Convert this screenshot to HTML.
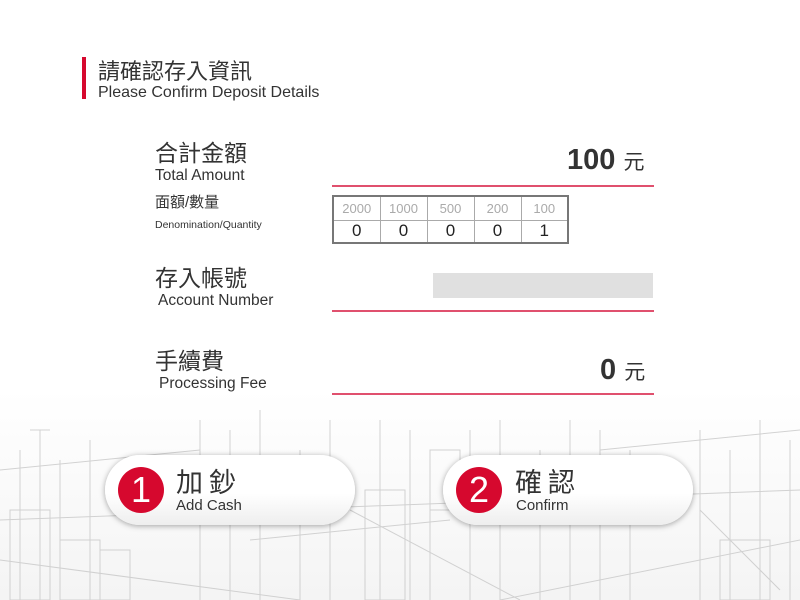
<!DOCTYPE html>
<html><head><meta charset="utf-8"><style>
*{margin:0;padding:0;box-sizing:border-box}
body{width:800px;height:600px;overflow:hidden;background:#fff;position:relative;font-family:"Liberation Sans","Noto Sans CJK TC",sans-serif;color:#333}
.a{position:absolute;white-space:nowrap}
.line{position:absolute;left:332px;width:322px;height:2px;background:#e0506e}
table{position:absolute;left:332px;top:195px;border-collapse:collapse;border:2px solid #777}
td{width:47px;text-align:center;border:1px solid #aaa}
tr.h td{height:24px;font-size:13px;color:#aaa}
tr.v td{height:23px;font-size:17px;color:#222}
.pill{position:absolute;top:455px;width:250px;height:70px;border-radius:35px;background:linear-gradient(#fff 55%,#eee);box-shadow:0 1px 6px rgba(0,0,0,.35)}
.circ{position:absolute;left:13px;top:12px;width:46px;height:46px;border-radius:50%;background:#d6082e;color:#fff;font-size:36px;text-align:center;line-height:46px}
</style></head><body>
<svg class="a" style="left:0;top:390px" width="800" height="210" stroke="#c8c8c8" stroke-width="1" fill="none">
<defs><linearGradient id="g" x1="0" y1="0" x2="0" y2="1"><stop offset="0" stop-color="#fff"/><stop offset="1" stop-color="#f4f4f4"/></linearGradient></defs>
<rect width="800" height="210" fill="url(#g)" stroke="none"/>
<g opacity=".8">
<path d="M20 60v150M40 40v170M60 70v140M90 50v160M30 40h20M200 30v180M230 40v170M260 20v190M300 60v150M330 30v180M380 30v180M410 40v170M430 60v150M470 40v170M500 30v180M540 60v150M570 30v180M600 40v170M630 60v150M700 40v170M730 60v150M760 30v180M790 50v160"/>
<path d="M0 130L800 100M0 170L300 210M500 210L800 150M350 120L520 210M600 60L800 40M0 80L200 60M250 150L450 130M700 120L780 200"/>
<path d="M365 100h40v110h-40zM430 60h30v60h-30zM720 150h50v60h-50zM10 120h40v90h-40zM60 150h40v60h-40zM100 160h30v50h-30z"/>
</g></svg>
<div class="a" style="left:82px;top:57px;width:4px;height:42px;background:#d6082e"></div>
<div class="a" style="left:98px;top:54px;font-size:22px;color:#333">請確認存入資訊</div>
<div class="a" style="left:98px;top:84px;font-size:16px;color:#333">Please Confirm Deposit Details</div>

<div class="a" style="left:155px;top:134px;font-size:23px">合計金額</div>
<div class="a" style="left:155px;top:167px;font-size:15.5px">Total Amount</div>
<div class="a" style="left:567px;top:144px;font-size:29px;font-weight:bold;color:#333">100 <span style="font-size:21px;font-weight:normal">元</span></div>
<div class="line" style="top:185px"></div>

<div class="a" style="left:155px;top:191px;font-size:15px">面額/數量</div>
<div class="a" style="left:155px;top:219px;font-size:10.5px">Denomination/Quantity</div>
<table><tr class="h"><td>2000</td><td>1000</td><td>500</td><td>200</td><td>100</td></tr>
<tr class="v"><td>0</td><td>0</td><td>0</td><td>0</td><td>1</td></tr></table>

<div class="a" style="left:155px;top:259px;font-size:23px">存入帳號</div>
<div class="a" style="left:158px;top:292px;font-size:15.5px">Account Number</div>
<div class="a" style="left:433px;top:273px;width:220px;height:25px;background:#e0e0e0"></div>
<div class="line" style="top:310px"></div>

<div class="a" style="left:155px;top:342px;font-size:23px">手續費</div>
<div class="a" style="left:159px;top:375px;font-size:15.5px">Processing Fee</div>
<div class="a" style="left:600px;top:354px;font-size:29px;font-weight:bold">0 <span style="font-size:21px;font-weight:normal">元</span></div>
<div class="line" style="top:393px"></div>

<div class="pill" style="left:105px"><div class="circ">1</div>
<div class="a" style="left:71px;top:6px;font-size:27px;letter-spacing:6px">加鈔</div>
<div class="a" style="left:71px;top:42px;font-size:15px">Add Cash</div></div>
<div class="pill" style="left:443px"><div class="circ">2</div>
<div class="a" style="left:72px;top:6px;font-size:27px;letter-spacing:6px">確認</div>
<div class="a" style="left:73px;top:42px;font-size:15px">Confirm</div></div>
</body></html>
